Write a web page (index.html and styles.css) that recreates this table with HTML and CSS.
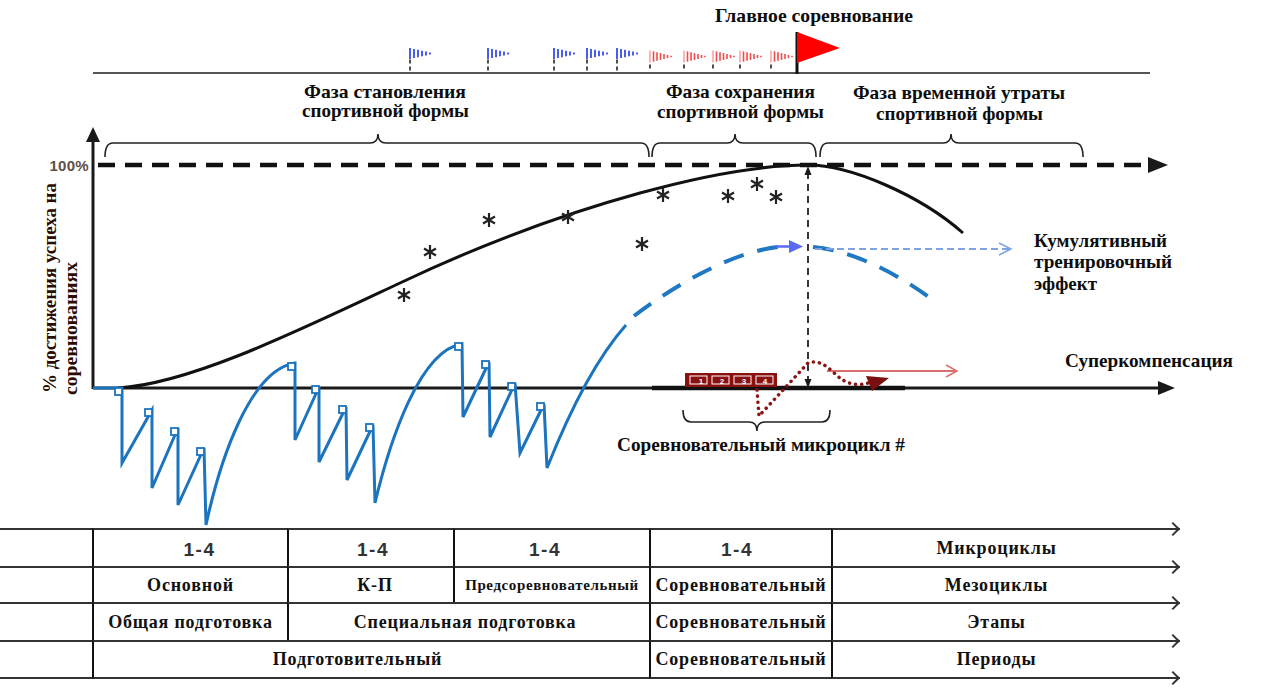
FILE: index.html
```html
<!DOCTYPE html>
<html lang="ru">
<head>
<meta charset="utf-8">
<title>Спортивная форма</title>
<link rel="stylesheet" href="styles.css">
</head>
<body>
<div class="page">
  <svg class="chart" width="1281" height="528" viewBox="0 0 1281 528" xmlns="http://www.w3.org/2000/svg">
    <defs>
      <g id="bf">
        <line x1="0" y1="-5.5" x2="0" y2="5.5" class="bfs"/>
        <line x1="4" y1="-4.6" x2="4" y2="4.6" class="bfs"/>
        <line x1="8" y1="-3.7" x2="8" y2="3.7" class="bfs"/>
        <line x1="12" y1="-2.8" x2="12" y2="2.8" class="bfs"/>
        <line x1="16" y1="-1.9" x2="16" y2="1.9" class="bfs"/>
        <line x1="20" y1="-1" x2="20" y2="1" class="bfs"/>
        <line x1="0" y1="6" x2="0" y2="19.5" class="pole"/>
      </g>
      <g id="rf">
        <line x1="0" y1="-6" x2="0" y2="6" class="rfp"/>
        <line x1="3.5" y1="-5.2" x2="3.5" y2="5.2" class="rfs"/>
        <line x1="7" y1="-4.3" x2="7" y2="4.3" class="rfs"/>
        <line x1="10.5" y1="-3.4" x2="10.5" y2="3.4" class="rfs"/>
        <line x1="14" y1="-2.5" x2="14" y2="2.5" class="rfs"/>
        <line x1="17.5" y1="-1.6" x2="17.5" y2="1.6" class="rfs"/>
        <line x1="21" y1="-0.8" x2="21" y2="0.8" class="rfs"/>
        <line x1="0" y1="8" x2="0" y2="15" class="pole"/>
      </g>
      <g id="ast">
        <path d="M0 -7 V7 M-6 -3.5 L6 3.5 M-6 3.5 L6 -3.5" class="astp"/>
      </g>
    </defs>

    <!-- top line & flags -->
    <line x1="93" y1="73" x2="1150" y2="73" class="topline"/>
    <use href="#bf" x="410" y="53.5"/>
    <use href="#bf" x="488" y="53.5"/>
    <use href="#bf" x="554" y="53.5"/>
    <use href="#bf" x="587" y="53.5"/>
    <use href="#bf" x="617" y="53.5"/>
    <use href="#rf" x="650" y="56.5"/>
    <use href="#rf" x="684" y="56.5"/>
    <use href="#rf" x="713" y="56.5"/>
    <use href="#rf" x="740" y="56.5"/>
    <use href="#rf" x="771" y="56.5"/>
    <line x1="797" y1="32" x2="797" y2="74" class="bigpole"/>
    <polygon points="797,32 840,48 797,63" class="bigflag"/>
    <text class="lbl" x="715" y="22" textLength="198" lengthAdjust="spacingAndGlyphs">Главное соревнование</text>

    <!-- phase labels -->
    <text class="lbl" x="304" y="98" textLength="162" lengthAdjust="spacingAndGlyphs">Фаза  становления</text>
    <text class="lbl" x="302" y="117" textLength="167" lengthAdjust="spacingAndGlyphs">спортивной формы</text>
    <text class="lbl" x="666" y="98" textLength="149" lengthAdjust="spacingAndGlyphs">Фаза сохранения</text>
    <text class="lbl" x="657" y="118" textLength="167" lengthAdjust="spacingAndGlyphs">спортивной формы</text>
    <text class="lbl" x="853" y="99" textLength="212" lengthAdjust="spacingAndGlyphs">Фаза временной утраты</text>
    <text class="lbl" x="876" y="120" textLength="167" lengthAdjust="spacingAndGlyphs">спортивной формы</text>

    <!-- braces -->
    <path class="brace" d="M105 157 Q105 143 113 143 L370 143 Q378 143 378 134 Q378 143 386 143 L641 143 Q649 143 649 157"/>
    <path class="brace" d="M652 157 Q652 143 660 143 L727 143 Q735 143 735 134 Q735 143 743 143 L808 143 Q816 143 816 157"/>
    <path class="brace" d="M820 157 Q820 143 828 143 L943 143 Q951 143 951 134 Q951 143 959 143 L1075 143 Q1083 143 1083 157"/>

    <!-- axes -->
    <line x1="93" y1="138" x2="93" y2="389" class="axis"/>
    <polygon points="86,142 93,127 100,142" class="axhead"/>
    <line x1="93" y1="388" x2="1162" y2="388" class="axis"/>
    <polygon points="1158,381 1175,388 1158,395" class="axhead"/>
    <line x1="652" y1="388" x2="905" y2="388" class="axisthick"/>
    <line x1="98" y1="165" x2="1150" y2="165" class="dash100"/>
    <polygon points="1148,157 1168,165 1148,173" class="axhead"/>
    <text class="pct" x="89" y="171">100%</text>

    <text class="ylbl" transform="translate(56,393) rotate(-90)" textLength="210" lengthAdjust="spacingAndGlyphs">% достижения успеха на</text>
    <text class="ylbl" transform="translate(77,395) rotate(-90)" textLength="133" lengthAdjust="spacingAndGlyphs">соревнованиях</text>

    <!-- performance curve -->
    <path class="perf" d="M118 388 C190 384, 300 330, 400 283 C480 245, 560 215, 640 193 C700 176.5, 760 165, 808 165 C850 165, 920 195, 963 233"/>

    <!-- asterisks -->
    <use href="#ast" x="404" y="295"/>
    <use href="#ast" x="430" y="252"/>
    <use href="#ast" x="489" y="220"/>
    <use href="#ast" x="568" y="217"/>
    <use href="#ast" x="642" y="244"/>
    <use href="#ast" x="663" y="195"/>
    <use href="#ast" x="728" y="196"/>
    <use href="#ast" x="757" y="184"/>
    <use href="#ast" x="776" y="197"/>

    <!-- vertical dashed -->
    <line x1="808" y1="172" x2="808" y2="382" class="vdash"/>
    <polygon points="804.5,175 808,166 811.5,175" class="axhead"/>
    <polygon points="804.5,379 808,388 811.5,379" class="axhead"/>

    <!-- blue sawtooth -->
    <path class="saw" d="M93 388 L122 388 L122 463 L152 410 L152 488 L178 428 L178 505 L204 448 L206 525 C220 460, 250 370, 295 363 L295 440 L319 387 L319 462 L346 407 L347 480 L373 425 L375 503 C390 440, 420 350, 462 344 L463 417 L489 362 L490 437 L515 383 L520 453 L544 404 L547 468 C570 410, 595 360, 626 325"/>
    <rect class="sq" x="115" y="388" width="7" height="7"/>
    <rect class="sq" x="145" y="409" width="7" height="7"/>
    <rect class="sq" x="171" y="428" width="7" height="7"/>
    <rect class="sq" x="197" y="448" width="7" height="7"/>
    <rect class="sq" x="288" y="363" width="7" height="7"/>
    <rect class="sq" x="312" y="386" width="7" height="7"/>
    <rect class="sq" x="339" y="406" width="7" height="7"/>
    <rect class="sq" x="366" y="424" width="7" height="7"/>
    <rect class="sq" x="455" y="343" width="7" height="7"/>
    <rect class="sq" x="482" y="361" width="7" height="7"/>
    <rect class="sq" x="508" y="383" width="7" height="7"/>
    <rect class="sq" x="537" y="403" width="7" height="7"/>

    <!-- cumulative effect -->
    <path class="bdash" d="M634 316 C682 280, 735 252, 778 247"/>
    <line x1="776" y1="246.5" x2="792" y2="246.5" class="parrow"/>
    <polygon points="789,240 803,246.5 789,253" class="phead"/>
    <path class="bdash" d="M813 247 C850 250, 895 272, 930 298"/>
    <line x1="815" y1="249" x2="1010" y2="249" class="ldash"/>
    <polyline points="999,243 1011,249 999,255" class="lhead"/>
    <text class="lbl" x="1034" y="247" textLength="133" lengthAdjust="spacingAndGlyphs">Кумулятивный</text>
    <text class="lbl" x="1034" y="268" textLength="138" lengthAdjust="spacingAndGlyphs">тренировочный</text>
    <text class="lbl" x="1034" y="290" textLength="63" lengthAdjust="spacingAndGlyphs">эффект</text>

    <!-- supercompensation -->
    <line x1="827" y1="371" x2="957" y2="371" class="rline"/>
    <polyline points="946,365 957,371 946,377" class="rhead"/>
    <path class="rdot" d="M757 390 L759 416 L808 363 C822 358, 832 372, 840 378 C850 386, 862 385, 868 383"/>
    <polygon points="866,376 889,378 872,391" class="dhead"/>
    <text class="lbl" x="1065" y="367" textLength="168" lengthAdjust="spacingAndGlyphs">Суперкомпенсация</text>

    <!-- microcycle box -->
    <rect x="685" y="373" width="92" height="14" class="mbox"/>
    <rect x="690" y="376" width="17" height="8" class="mcell"/>
    <rect x="712" y="376" width="17" height="8" class="mcell"/>
    <rect x="734" y="376" width="17" height="8" class="mcell"/>
    <rect x="756" y="376" width="17" height="8" class="mcell"/>
    <text class="mnum" x="701" y="383.5">1</text>
    <text class="mnum" x="722" y="383.5">2</text>
    <text class="mnum" x="744" y="383.5">3</text>
    <text class="mnum" x="765" y="383.5">4</text>
    <path class="brace" d="M683 410 Q683 422 691 422 L749 422 Q757 422 757 431 Q757 422 765 422 L822 422 Q830 422 830 410"/>
    <text class="lbl" x="617" y="451" textLength="288" lengthAdjust="spacingAndGlyphs">Соревновательный микроцикл #</text>
  </svg>

  <div class="grid">
    <div class="c"></div>
    <div class="c v num n1">1-4</div>
    <div class="c v num n2">1-4</div>
    <div class="c v num n3">1-4</div>
    <div class="c v num n4">1-4</div>
    <div class="c v name">Микроциклы</div>

    <div class="c"></div>
    <div class="c v">Основной</div>
    <div class="c v kp">К-П</div>
    <div class="c v small">Предсоревновательный</div>
    <div class="c v">Соревновательный</div>
    <div class="c v name">Мезоциклы</div>

    <div class="c"></div>
    <div class="c v">Общая подготовка</div>
    <div class="c v span2 spec">Специальная подготовка</div>
    <div class="c v">Соревновательный</div>
    <div class="c v name">Этапы</div>

    <div class="c b"></div>
    <div class="c v b span3 prep">Подготовительный</div>
    <div class="c v b">Соревновательный</div>
    <div class="c v b name">Периоды</div>
  </div>
</div>
</body>
</html>
```

FILE: styles.css
```css
html, body {
  margin: 0;
  padding: 0;
  background: #ffffff;
}

.page {
  width: 1281px;
  height: 689px;
  overflow: hidden;
  background: #ffffff;
}

.chart {
  display: block;
}

/* chart text */
.lbl {
  font-family: "Liberation Serif", "Times New Roman", serif;
  font-weight: bold;
  font-size: 19px;
  fill: #0d0d0d;
}

.ylbl {
  font-family: "Liberation Serif", "Times New Roman", serif;
  font-weight: bold;
  font-size: 18px;
  fill: #2a0c02;
}

.pct {
  font-family: "Liberation Sans", Arial, sans-serif;
  font-weight: bold;
  font-size: 15px;
  letter-spacing: 0.3px;
  text-anchor: end;
  fill: #5e5048;
}

.mnum {
  font-family: "Liberation Sans", Arial, sans-serif;
  font-weight: bold;
  font-size: 8px;
  fill: #ffffff;
  text-anchor: middle;
}

/* flags */
.bfs {
  stroke: #4b5cf2;
  stroke-width: 2;
}

.rfs {
  stroke: #f24a4a;
  stroke-width: 1.6;
}

.rfp {
  stroke: #f79a9a;
  stroke-width: 1.4;
}

.pole {
  stroke: #222222;
  stroke-width: 1.6;
  stroke-dasharray: 4 3;
}

.bigpole {
  stroke: #111111;
  stroke-width: 3;
}

.bigflag {
  fill: #ff0000;
}

.topline {
  stroke: #555555;
  stroke-width: 2;
}

/* axes */
.axis {
  stroke: #1a1a1a;
  stroke-width: 3;
}

.axisthick {
  stroke: #111111;
  stroke-width: 4.5;
}

.axhead {
  fill: #1a1a1a;
}

.dash100 {
  stroke: #111111;
  stroke-width: 4.5;
  stroke-dasharray: 17 10;
}

.brace {
  fill: none;
  stroke: #222222;
  stroke-width: 1.6;
}

.vdash {
  stroke: #222222;
  stroke-width: 1.8;
  stroke-dasharray: 7 5;
}

.perf {
  fill: none;
  stroke: #111111;
  stroke-width: 3;
}

.astp {
  stroke: #222222;
  stroke-width: 2.2;
  fill: none;
}

.saw {
  fill: none;
  stroke: #1b74bd;
  stroke-width: 3;
  stroke-linejoin: miter;
}

.sq {
  fill: #ffffff;
  stroke: #1b74bd;
  stroke-width: 1.8;
}

.bdash {
  fill: none;
  stroke: #1e78c2;
  stroke-width: 4;
  stroke-dasharray: 21 14;
}

.parrow {
  stroke: #5a6af5;
  stroke-width: 2.5;
}

.phead {
  fill: #5a6af5;
}

.ldash {
  stroke: #7ea2e2;
  stroke-width: 1.8;
  stroke-dasharray: 7 4;
}

.lhead {
  fill: none;
  stroke: #7ea2e2;
  stroke-width: 1.5;
}

.rline {
  stroke: #d97070;
  stroke-width: 1.8;
}

.rhead {
  fill: none;
  stroke: #d97070;
  stroke-width: 1.6;
}

.rdot {
  fill: none;
  stroke: #8b1414;
  stroke-width: 3.5;
  stroke-linecap: round;
  stroke-dasharray: 0.1 6;
}

.dhead {
  fill: #7a0f0f;
}

.mbox {
  fill: #8b1010;
}

.mcell {
  fill: none;
  stroke: #ffffff;
  stroke-width: 1;
}

/* table */
.grid {
  display: grid;
  width: 1180px;
  grid-template-columns: 92px 195px 166px 196px 182px 349px;
  grid-template-rows: 38px 36px 38px 39px;
}

.c {
  box-sizing: border-box;
  border-top: 2px solid #333333;
  display: flex;
  align-items: center;
  justify-content: center;
  font-family: "Liberation Serif", "Times New Roman", serif;
  font-weight: bold;
  font-size: 18px;
  letter-spacing: 0.8px;
  color: #111111;
  white-space: nowrap;
}

.c.v {
  border-left: 2px solid #111111;
}

.c.b {
  border-bottom: 2px solid #333333;
}

.span2 {
  grid-column: span 2;
}

.span3 {
  grid-column: span 3;
}

.spec {
  padding-right: 8px;
}

.prep {
  padding-right: 28px;
}

.kp {
  padding-left: 8px;
}

.small {
  font-size: 15px;
  letter-spacing: 0.6px;
}

.num {
  font-family: "Liberation Sans", Arial, sans-serif;
  font-size: 19px;
  letter-spacing: 1.5px;
  color: #333333;
  padding-top: 4px;
}

.n1 { padding-left: 18px; }
.n2 { padding-left: 4px; }
.n3 { padding-right: 14px; }
.n4 { padding-right: 8px; }

.name {
  position: relative;
  padding-right: 20px;
}

.name::after {
  content: "";
  position: absolute;
  right: 2px;
  top: -6px;
  width: 8px;
  height: 8px;
  border-top: 2px solid #333333;
  border-right: 2px solid #333333;
  transform: rotate(45deg);
}

.name.b::before {
  content: "";
  position: absolute;
  right: 2px;
  bottom: -6px;
  width: 8px;
  height: 8px;
  border-top: 2px solid #333333;
  border-right: 2px solid #333333;
  transform: rotate(45deg);
}
```
